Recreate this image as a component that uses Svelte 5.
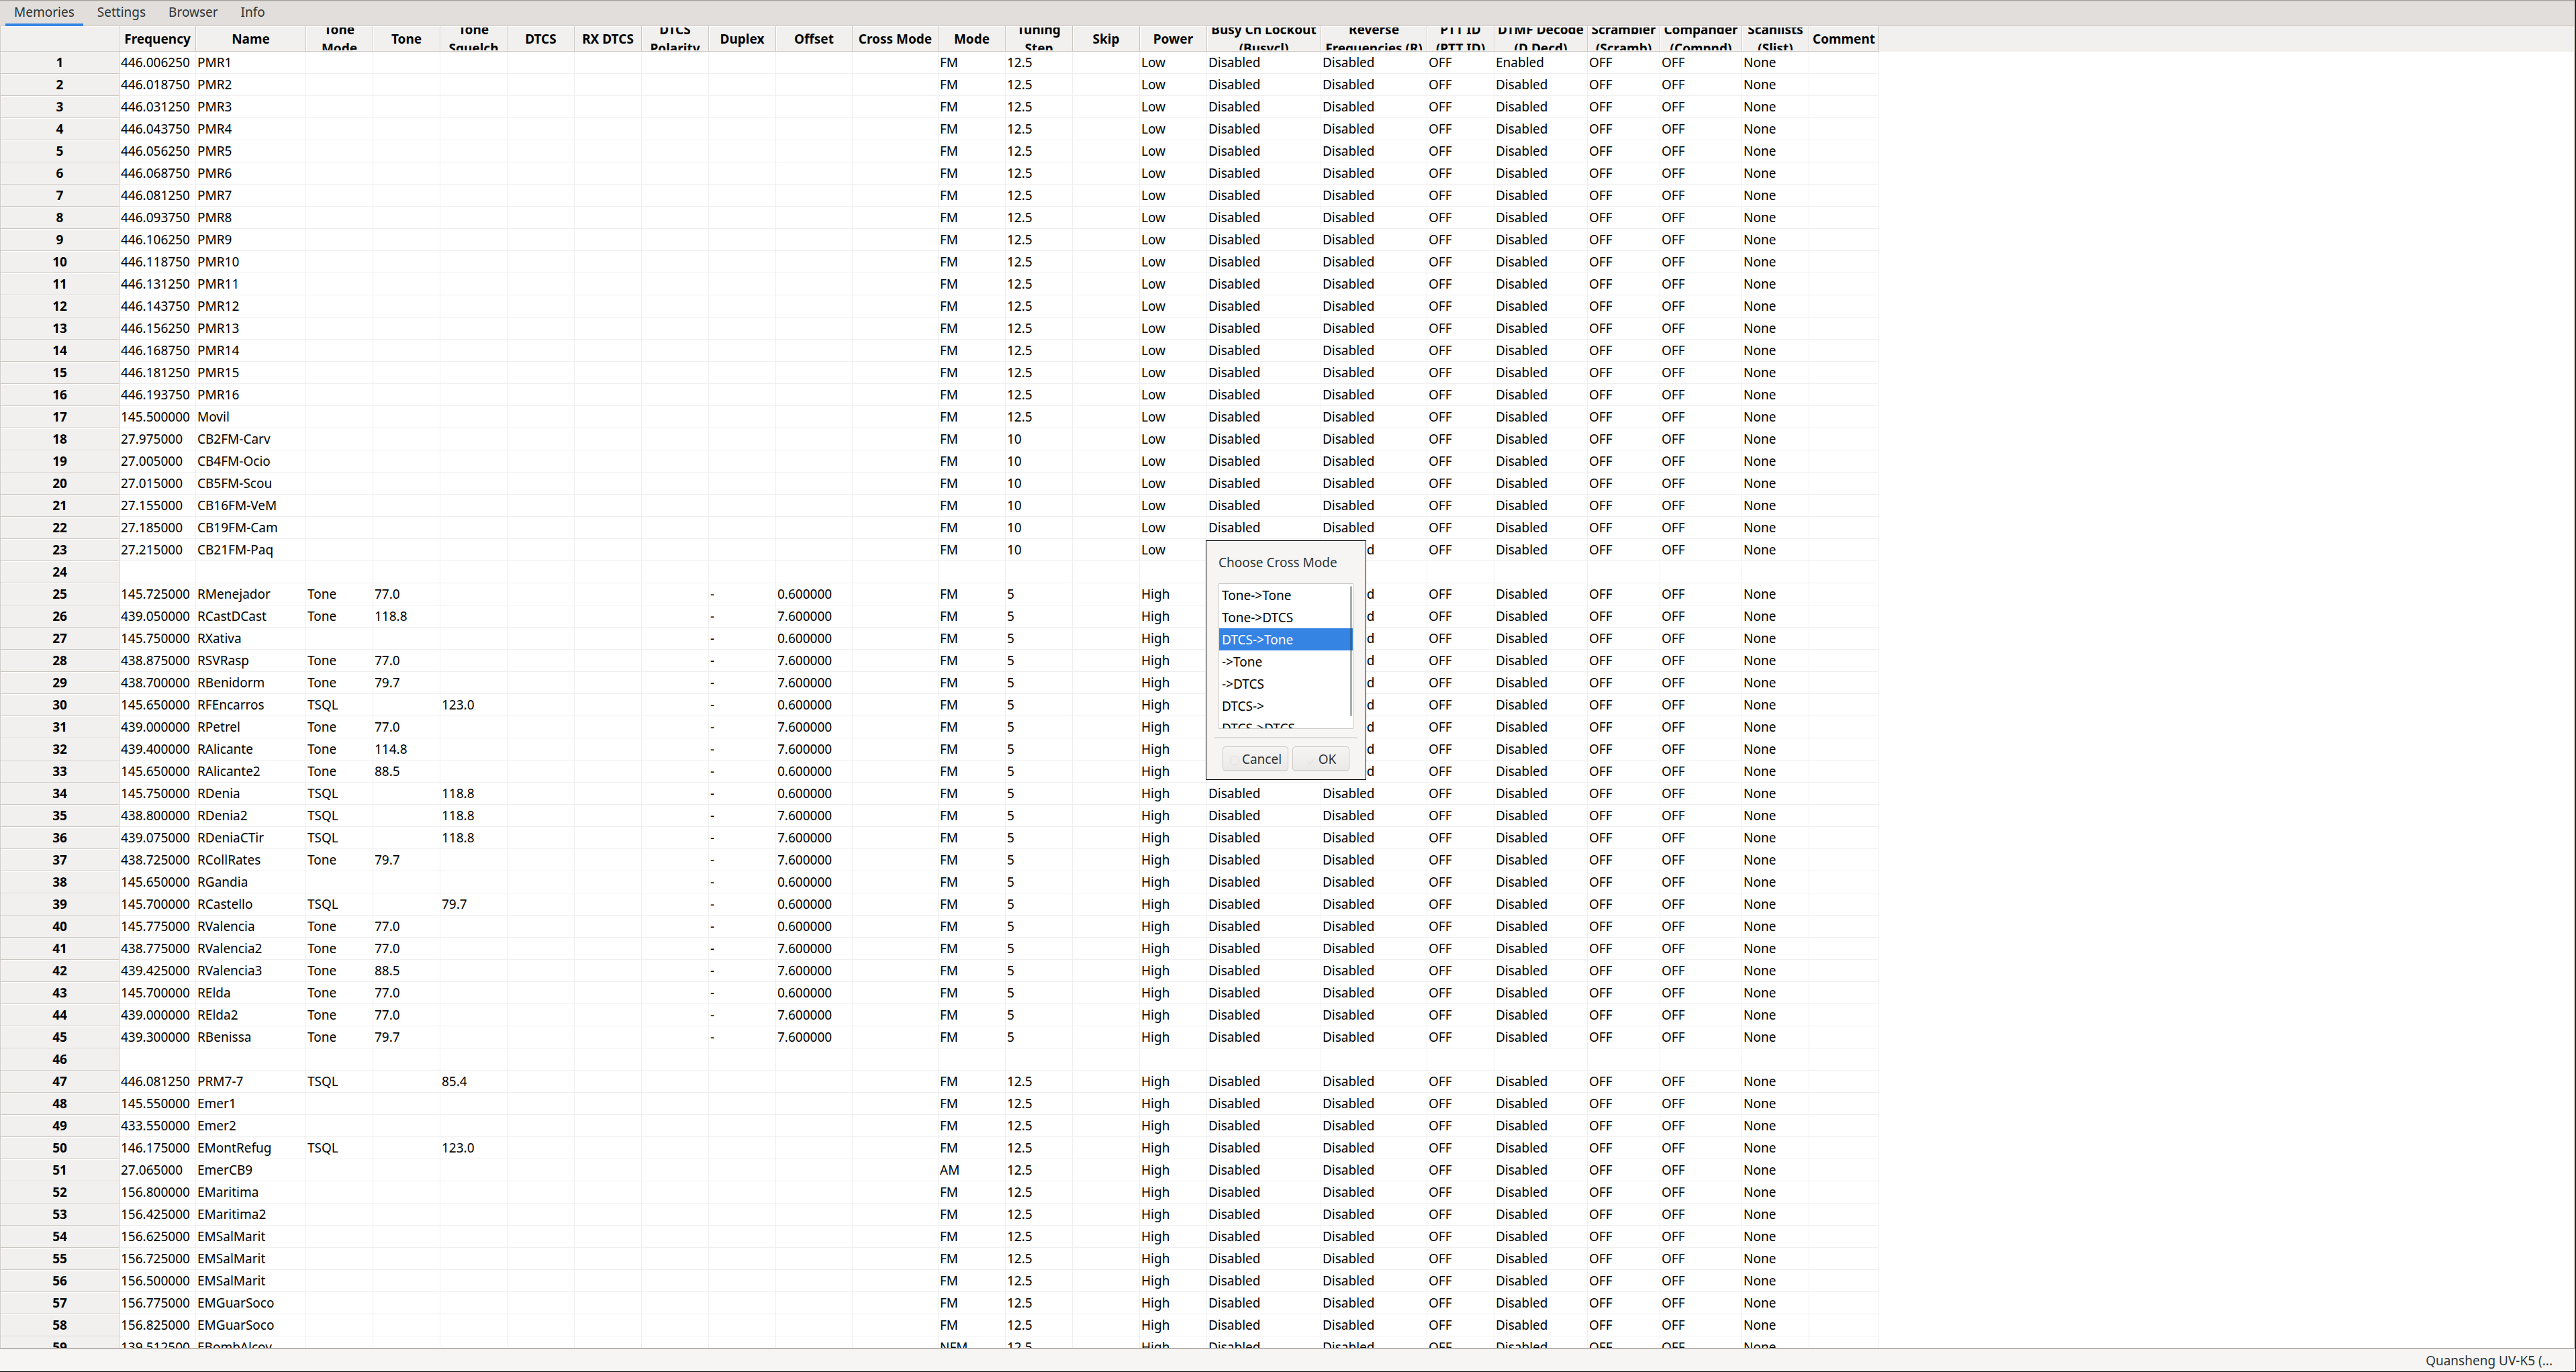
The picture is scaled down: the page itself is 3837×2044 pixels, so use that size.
<script lang="ts">
  const tabs = ['Memories', 'Settings', 'Browser', 'Info'];

  const columns = [
    { label: 'Frequency', width: 114 },
    { label: 'Name', width: 164 },
    { label: 'Tone\nMode', width: 100 },
    { label: 'Tone', width: 100 },
    { label: 'Tone\nSquelch', width: 100 },
    { label: 'DTCS', width: 100 },
    { label: 'RX DTCS', width: 100 },
    { label: 'DTCS\nPolarity', width: 100 },
    { label: 'Duplex', width: 100 },
    { label: 'Offset', width: 114 },
    { label: 'Cross Mode', width: 128 },
    { label: 'Mode', width: 100 },
    { label: 'Tuning\nStep', width: 100 },
    { label: 'Skip', width: 100 },
    { label: 'Power', width: 100 },
    { label: 'Busy Ch Lockout\n(Busycl)', width: 170 },
    { label: 'Reverse\nFrequencies (R)', width: 158 },
    { label: 'PTT ID\n(PTT ID)', width: 100 },
    { label: 'DTMF Decode\n(D Decd)', width: 139 },
    { label: 'Scrambler\n(Scramb)', width: 108 },
    { label: 'Compander\n(Compnd)', width: 122 },
    { label: 'Scanlists\n(Slist)', width: 100 },
    { label: 'Comment', width: 104 }
  ];

  // frequency|name|tone mode|tone|offset, one line per channel
  const low = `446.006250|PMR1
446.018750|PMR2
446.031250|PMR3
446.043750|PMR4
446.056250|PMR5
446.068750|PMR6
446.081250|PMR7
446.093750|PMR8
446.106250|PMR9
446.118750|PMR10
446.131250|PMR11
446.143750|PMR12
446.156250|PMR13
446.168750|PMR14
446.181250|PMR15
446.193750|PMR16
145.500000|Movil
27.975000|CB2FM-Carv
27.005000|CB4FM-Ocio
27.015000|CB5FM-Scou
27.155000|CB16FM-VeM
27.185000|CB19FM-Cam
27.215000|CB21FM-Paq`;

  const repeaters = `145.725000|RMenejador|Tone|77.0|0.600000
439.050000|RCastDCast|Tone|118.8|7.600000
145.750000|RXativa|||0.600000
438.875000|RSVRasp|Tone|77.0|7.600000
438.700000|RBenidorm|Tone|79.7|7.600000
145.650000|RFEncarros|TSQL|123.0|0.600000
439.000000|RPetrel|Tone|77.0|7.600000
439.400000|RAlicante|Tone|114.8|7.600000
145.650000|RAlicante2|Tone|88.5|0.600000
145.750000|RDenia|TSQL|118.8|0.600000
438.800000|RDenia2|TSQL|118.8|7.600000
439.075000|RDeniaCTir|TSQL|118.8|7.600000
438.725000|RCollRates|Tone|79.7|7.600000
145.650000|RGandia|||0.600000
145.700000|RCastello|TSQL|79.7|0.600000
145.775000|RValencia|Tone|77.0|0.600000
438.775000|RValencia2|Tone|77.0|7.600000
439.425000|RValencia3|Tone|88.5|7.600000
145.700000|RElda|Tone|77.0|0.600000
439.000000|RElda2|Tone|77.0|7.600000
439.300000|RBenissa|Tone|79.7|7.600000`;

  const emergency = `446.081250|PRM7-7|TSQL|85.4
145.550000|Emer1
433.550000|Emer2
146.175000|EMontRefug|TSQL|123.0
27.065000|EmerCB9
156.800000|EMaritima
156.425000|EMaritima2
156.625000|EMSalMarit
156.725000|EMSalMarit
156.500000|EMSalMarit
156.775000|EMGuarSoco
156.825000|EMGuarSoco
139.512500|EBombAlcoy`;

  function channel(line: string, power: string) {
    const [freq, name, toneMode = '', tone = '', offset = ''] = line.split('|');
    let mode = 'FM';
    if (name === 'EmerCB9') mode = 'AM';
    if (name === 'EBombAlcoy') mode = 'NFM';
    let step = offset ? '5' : '12.5';
    if (power === 'Low' && freq.startsWith('27.')) step = '10';
    const decode = name === 'PMR1' ? 'Enabled' : 'Disabled';
    return [
      freq, name, toneMode,
      toneMode === 'Tone' ? tone : '',
      toneMode === 'TSQL' ? tone : '',
      '', '', '',
      offset ? '-' : '',
      offset, '', mode, step, '', power,
      'Disabled', 'Disabled', 'OFF', decode, 'OFF', 'OFF', 'None', ''
    ];
  }

  const blank = columns.map(() => '');
  const rows = [
    ...low.split('\n').map((l) => channel(l, 'Low')),
    blank,
    ...repeaters.split('\n').map((l) => channel(l, 'High')),
    blank,
    ...emergency.split('\n').map((l) => channel(l, 'High'))
  ];

  const crossModes = [
    'Tone->Tone', 'Tone->DTCS', 'DTCS->Tone', '->Tone',
    '->DTCS', 'DTCS->', 'DTCS->DTCS', 'Tone->'
  ];

  let activeTab = $state('Memories');
  let crossMode = $state('DTCS->Tone');
</script>

<div class="window">
  <div class="notebook">
    <nav class="tabs">
      {#each tabs as tab}
        <button class="tab" class:active={tab === activeTab} onclick={() => (activeTab = tab)}>{tab}</button>
      {/each}
    </nav>

    <main class="sheet">
      <table>
        <colgroup>
          <col class="number-col" />
          {#each columns as col}
            <col style="width: {col.width}px" />
          {/each}
        </colgroup>
        <thead>
          <tr>
            <th class="corner"></th>
            {#each columns as col}
              <th><div class="label">{col.label}</div></th>
            {/each}
          </tr>
        </thead>
        <tbody>
          {#each rows as row, i}
            <tr>
              <th scope="row">{i + 1}</th>
              {#each row as cell}
                <td>{cell}</td>
              {/each}
            </tr>
          {/each}
        </tbody>
      </table>
    </main>
  </div>

  <footer class="status">Quansheng UV-K5 (...</footer>

  <div class="dialog" role="dialog" aria-labelledby="cross-title">
    <label id="cross-title" for="cross-mode">Choose Cross Mode</label>
    <div class="list">
      <select id="cross-mode" size="7" bind:value={crossMode}>
        {#each crossModes as mode}
          <option value={mode} class:selected={mode === crossMode}>{mode}</option>
        {/each}
      </select>
      <span class="thumb"></span>
    </div>
    <hr />
    <div class="buttons">
      <button class="cancel">
        <svg width="16" height="16" viewBox="0 0 16 16"><path d="M5 1.500h6L14.500 5v6L11 14.500H5L1.500 11V5z" /></svg>
        Cancel
      </button>
      <button class="ok">
        <svg width="16" height="16" viewBox="0 0 16 16"><path d="M2.500 9l3.500 4 7.500-9" /></svg>
        OK
      </button>
    </div>
  </div>
</div>

<style>
  :global(body) {
    margin: 0;
    background: #fff;
  }

  .window {
    position: relative;
    display: flex;
    flex-direction: column;
    box-sizing: border-box;
    height: 100vh;
    overflow: hidden;
    border-right: 1px solid #000;
    border-bottom: 1px solid #000;
    font-family: 'Noto Sans', sans-serif;
    font-size: 19px;
    color: #000;
  }

  .notebook {
    display: flex;
    flex: 1;
    flex-direction: column;
    min-height: 0;
    border-top: 1px solid #a5a19d;
    border-right: 1px solid #a5a19d;
  }

  .tabs {
    display: flex;
    flex: none;
    box-sizing: border-box;
    height: 38px;
    padding-left: 8px;
    border-right: 1px solid #cdc7c2;
    border-bottom: 1px solid #cdc7c2;
    box-shadow: inset 0 1px #cdc7c2;
    background: #e1dedb;
  }

  .tab {
    height: 38px;
    padding: 0 13px;
    margin-right: 8px;
    border: 0;
    border-bottom: 4px solid transparent;
    background: none;
    color: #2e3436;
    font: inherit;
    line-height: 34px;
  }

  .tab.active {
    border-bottom-color: #3584e4;
  }

  .sheet {
    flex: 1;
    min-height: 0;
    overflow: hidden;
    border: 1px solid #cdc7c2;
    border-top: 0;
    background: linear-gradient(#f1f0ee 38px, #fff 38px);
  }

  table {
    table-layout: fixed;
    width: 0;
    border-collapse: separate;
    border-spacing: 0;
  }

  .number-col {
    width: 177px;
  }

  th,
  td {
    box-sizing: border-box;
    height: 33px;
    overflow: hidden;
    white-space: nowrap;
    line-height: 26px;
  }

  th {
    padding: 0;
    border-right: 1px solid #cdc7c2;
    border-bottom: 1px solid #cdc7c2;
    box-shadow: inset 0 1px #fff, inset 1px 0 #fff;
    background: #f1f0ee;
    font-weight: 700;
    text-align: center;
  }

  thead th {
    height: 38px;
    padding: 2px 0 1px;
  }

  td {
    padding: 0 0 0 2px;
    border-right: 1px solid #efefef;
    border-bottom: 1px solid #efefef;
  }

  .label {
    display: flex;
    align-items: center;
    justify-content: center;
    height: 34px;
    overflow: hidden;
    line-height: 28px;
    white-space: pre;
  }

  .status {
    flex: none;
    height: 33px;
    padding-right: 34px;
    border-top: 1px solid #a5a19d;
    background: #f6f5f4;
    color: #2e3436;
    line-height: 35px;
    text-align: right;
  }

  .dialog {
    position: absolute;
    top: 805px;
    left: 1796px;
    box-sizing: border-box;
    width: 239px;
    padding: 18px 12px 12px;
    border: 1px solid #000;
    background: #f6f5f4;
    color: #2e3436;
  }

  .dialog label {
    display: block;
    padding: 0 6px;
    line-height: 28px;
  }

  .list {
    position: relative;
    height: 215px;
    margin: 17px 6px 12px;
    overflow: hidden;
    border: 1px solid #cdc7c2;
    background: #fff;
  }

  select {
    display: block;
    width: 100%;
    height: 240px;
    padding: 0;
    border: 0;
    outline: 0;
    overflow: hidden;
    background: #fff;
    color: #000;
    font: inherit;
  }

  option {
    box-sizing: border-box;
    min-height: 33px;
    padding: 4px 4px 0;
  }

  option.selected {
    background: #3584e4 linear-gradient(#3584e4, #3584e4);
    color: #fff;
  }

  .thumb {
    position: absolute;
    top: 3px;
    right: 1px;
    width: 3px;
    height: 194px;
    border-radius: 2px;
    background: rgba(46, 52, 54, 0.4);
  }

  hr {
    height: 2px;
    margin: 0;
    border: 0;
    background: #dfdddb;
  }

  .buttons {
    display: flex;
    gap: 6px;
    padding: 12px 12px 0;
  }

  .buttons button {
    display: flex;
    align-items: center;
    justify-content: center;
    gap: 3px;
    box-sizing: border-box;
    height: 37px;
    padding: 0;
    border: 1px solid #cdc7c2;
    border-bottom-color: #bfb8b1;
    border-radius: 5px;
    background: linear-gradient(#f5f4f3, #ebe9e7);
    color: #2e3436;
    font: inherit;
  }

  .buttons .cancel {
    width: 98px;
  }

  .buttons .ok {
    width: 85px;
  }

  svg {
    margin-top: 4px;
    fill: none;
    stroke: #dedcda;
  }
</style>
